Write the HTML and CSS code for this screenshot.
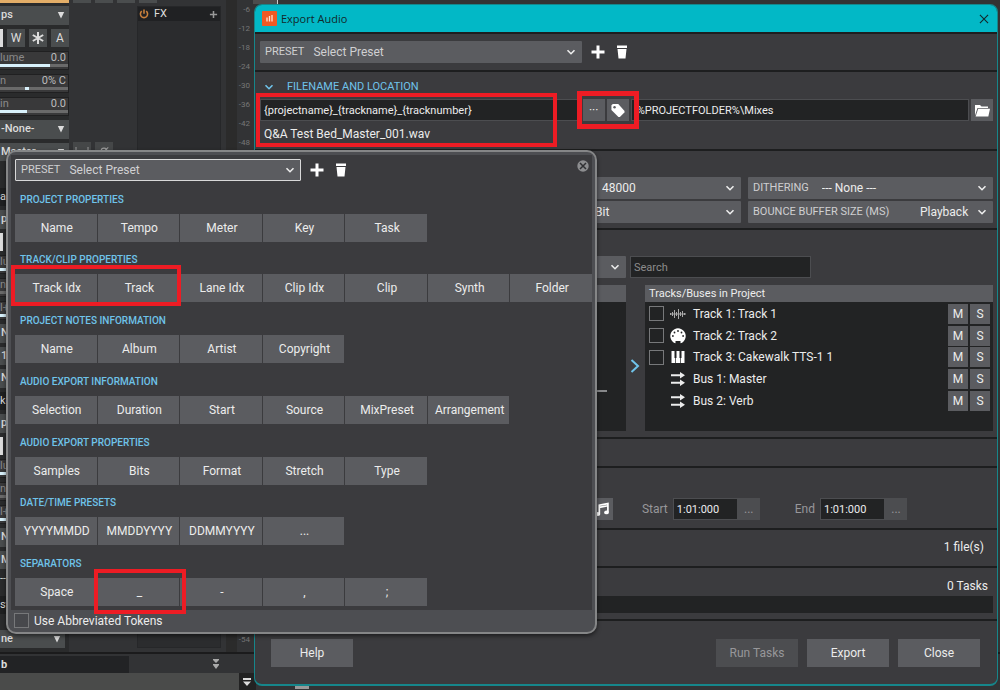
FILE: index.html
```html
<!DOCTYPE html>
<html lang="en">
<head>
<meta charset="utf-8">
<title>Export Audio</title>
<link rel="stylesheet" href="styles.css">
</head>
<body>
<svg class="defs" aria-hidden="true">
  <symbol id="chev" viewBox="0 0 10 10"><path d="M1.5 3.2 5 6.7 8.5 3.2" fill="none" stroke="currentColor" stroke-width="1.6"/></symbol>
  <symbol id="plus" viewBox="0 0 14 14"><path d="M7 0.500v13M.5 7h13" stroke="currentColor" stroke-width="3"/></symbol>
  <symbol id="trash" viewBox="0 0 12 14"><path d="M1 .5h10v2.500H1zM1.500 4h9l-1 9.500h-7z" fill="currentColor"/></symbol>
  <symbol id="down" viewBox="0 0 8 8"><path d="M.8 1h6.400L4 7.500z" fill="currentColor"/></symbol>
  <symbol id="bus" viewBox="0 0 16 16"><path d="M1 4.200h10M1 11.800h10" stroke="currentColor" stroke-width="2"/><path d="M10 1l5 3.200-5 3.200zM10 8.600l5 3.200-5 3.200z" fill="currentColor"/></symbol>
</svg>

<div class="app">
  <div class="mixer">
    <div class="strips">
      <div class="clip-edge"></div>
      <div class="channel">
        <button class="drop">ps<svg><use href="#down"/></svg></button>
        <div class="modes"><button class="lit" aria-label="Read"></button><button>W</button><button class="star" aria-label="Freeze"><svg viewBox="0 0 14 14"><path d="M7 1v12M1.800 4l10.400 6M12.200 4 1.800 10" stroke="currentColor" stroke-width="2"/></svg></button><button>A</button></div>
        <label class="knob"><span>lume</span><b>0.0</b><input class="r75" type="range" value="75"></label>
        <label class="knob"><span>n</span><b>0% C</b><input class="pan" type="range" value="40"></label>
        <label class="knob"><span>in</span><b>0.0</b><input class="r40" type="range" value="40"></label>
        <button class="drop">-None-<svg><use href="#down"/></svg></button>
        <button class="drop">Master<svg><use href="#down"/></svg></button>
        <div></div>
        <div class="name">ack</div>
      </div>
      <div class="channel">
        <button class="drop">ps</button>
        <div class="modes"><button class="lit" aria-label="Read"></button></div>
        <label class="knob"><span>lu</span><input class="r75" type="range" value="75"></label>
        <label class="knob"><span>n</span><input class="pan" type="range" value="40"></label>
        <label class="knob"><span>l+</span><input class="r40" type="range" value="40"></label>
        <button class="drop">No</button>
        <button class="drop">1-C</button>
        <button class="drop">No</button>
        <div class="name">ke</div>
      </div>
      <div class="channel">
        <button class="drop">ps</button>
        <div class="modes"><button class="lit" aria-label="Read"></button></div>
        <label class="knob"><span>lu</span><input class="r75" type="range" value="75"></label>
        <label class="knob"><span>n</span><input class="pan" type="range" value="40"></label>
        <label class="knob"><span>l+</span><input class="r40" type="range" value="40"></label>
        <button class="drop">No</button>
        <button class="drop">Ma</button>
        <div>--</div>
        <div class="name">ste</div>
      </div>
      <button class="drop last">ne<svg><use href="#down"/></svg></button>
    </div>
    <div class="side">
      <div class="tabs"><i></i><i></i><i></i><i></i></div>
      <div class="tools">
        <button aria-label="Interleave"><svg viewBox="0 0 14 10"><path d="M1 1v8M13 1v8M4 4v5M6 5v4M8 5v4M10 4v5" stroke="currentColor"/></svg></button>
        <button aria-label="Phase"><svg viewBox="0 0 14 14"><circle cx="7" cy="7" r="4" fill="none" stroke="currentColor" stroke-width="1.500"/><path d="M2 12 13 2" stroke="currentColor" stroke-width="1.500"/></svg></button>
      </div>
    </div>
    <div class="fx">
      <div class="fx-head">
        <svg class="power" viewBox="0 0 12 12"><path d="M3.400 2.600a4.300 4.300 0 1 0 5.200 0M6 .6v5" fill="none" stroke="currentColor" stroke-width="1.900"/></svg>
        <span>FX</span><svg class="add" viewBox="0 0 10 10"><path d="M5 1v8M1 5h8" stroke="currentColor" stroke-width="1.700"/></svg>
      </div>
    </div>
    <div class="meter"></div>
    <div class="ticks"><span>-6</span><span>-12</span><span>-18</span><span>-24</span><span>-30</span><span>-36</span><span>-42</span><span>-48</span><span class="end">-54</span></div>
    <div class="timeline"><i></i></div>
  </div>
  <div class="trackbar"><div class="tname">b</div><svg viewBox="0 0 8 10"><path d="M1 0h6v1L4 4 1 1zM1 5h6v1L4 10 1 6z" fill="currentColor"/></svg></div>
  <div class="bottom"><div class="fill"></div><div class="corner"><svg viewBox="0 0 10 10"><path d="M1 1h8v2H1zM1 4.500h8L5 9z" fill="currentColor"/></svg></div><i></i></div>
</div>

<main class="dialog">
  <header class="title">
    <svg class="logo" viewBox="0 0 15 15"><rect width="15" height="15" rx="1" fill="#ee5a24"/><path d="M5 6.500v4M7.500 5v5.500M10 4v6.500" stroke="#ffe3d5" stroke-width="1.300"/></svg>
    <h1>Export Audio</h1>
    <button class="x" aria-label="Close window"><svg viewBox="0 0 11 11"><path d="m1 1 9 9M10 1l-9 9" stroke="currentColor" stroke-width="1.200"/></svg></button>
  </header>
  <section class="preset">
    <div class="field grow"><label for="p1">PRESET</label><select id="p1"><option>Select Preset</option></select><svg><use href="#chev"/></svg></div>
    <button class="icon" aria-label="Add preset"><svg><use href="#plus"/></svg></button>
    <button class="icon" aria-label="Delete preset"><svg><use href="#trash"/></svg></button>
  </section>
  <section class="file">
    <h2><svg><use href="#chev"/></svg>FILENAME AND LOCATION</h2>
    <div class="file-row">
      <input class="text tmpl" aria-label="File name" value="{projectname}_{trackname}_{tracknumber}">
      <button class="sq">···</button>
      <button class="sq tag" aria-label="Tokens"><svg viewBox="0 0 16 16"><path d="M1 2.500 2.500 1h5.700L15 8.500 14.800 10 10 15H8.500L1 7.500z" fill="#fff"/><circle cx="4.300" cy="4.500" r="1.300" fill="#5b5c60"/></svg></button>
      <input class="text path" aria-label="Folder" value="%PROJECTFOLDER%&#92;Mixes">
      <button class="sq" aria-label="Browse"><svg viewBox="0 0 16 14"><path d="M1 12V1.500h5L7.500 3H14v1.500H3.500z" fill="#fff"/><path d="M4.200 5.300H16L14.300 13H1.600z" fill="#fff"/></svg></button>
    </div>
    <output>Q&amp;A Test Bed_Master_001.wav</output>
  </section>
  <section class="format">
    <div class="field rate"><select aria-label="Sample rate"><option>48000</option></select><svg><use href="#chev"/></svg></div>
    <div class="field"><label for="d1">DITHERING</label><select id="d1"><option>--- None ---</option></select><svg><use href="#chev"/></svg></div>
    <div class="field depth"><select aria-label="Bit depth"><option>Bit</option></select><svg><use href="#chev"/></svg></div>
    <div class="field buffer"><label for="b1">BOUNCE BUFFER SIZE (MS)</label><select id="b1"><option>Playback</option></select><svg><use href="#chev"/></svg></div>
  </section>
  <section class="source">
    <div class="source-left">
      <div class="field"><select aria-label="Source"><option></option></select><svg><use href="#chev"/></svg></div>
      <div class="panel"><div class="panel-head"></div><div class="panel-body"><hr></div></div>
    </div>
    <div class="source-right">
      <input class="text search" placeholder="Search" aria-label="Search">
      <div class="picker">
        <svg class="arrow" viewBox="0 0 10 14"><path d="m1.500 1 6.500 6-6.500 6" fill="none" stroke="currentColor" stroke-width="2"/></svg>
        <div class="panel">
          <div class="panel-head">Tracks/Buses in Project</div>
          <div class="panel-body">
            <ul>
              <li><input type="checkbox" id="t1"><svg viewBox="0 0 16 16"><path d="M.5 7v2M2.500 6v4M4.500 4v8M6.500 6v4M8.500 3v10M10.500 6v4M12.500 5v6M14.500 7v2M0 8h16" stroke="#aaa"/></svg><label for="t1">Track 1: Track 1</label><button>M</button><button>S</button></li>
              <li><input type="checkbox" id="t2"><svg viewBox="0 0 16 16"><path d="M5.500 15.300A7.700 7.700 0 1 1 10.500 15.300V13h-5z" fill="#fff"/><g fill="#222324"><circle cx="2.900" cy="8" r=".9"/><circle cx="4.500" cy="4.500" r=".9"/><circle cx="8" cy="3" r=".9"/><circle cx="11.500" cy="4.500" r=".9"/><circle cx="13.100" cy="8" r=".9"/></g></svg><label for="t2">Track 2: Track 2</label><button>M</button><button>S</button></li>
              <li><input type="checkbox" id="t3"><svg viewBox="0 0 16 16"><path d="M1.500 2h13v12h-13z" fill="#fff"/><path d="M4.500 2h2v7H6v5h-.7V9h-.8zM9.500 2h2v7h-.8v5H10V9h-.5z" fill="#222324"/></svg><label for="t3">Track 3: Cakewalk TTS-1 1</label><button>M</button><button>S</button></li>
              <li><i></i><svg><use href="#bus"/></svg><span>Bus 1: Master</span><button>M</button><button>S</button></li>
              <li><i></i><svg><use href="#bus"/></svg><span>Bus 2: Verb</span><button>M</button><button>S</button></li>
            </ul>
          </div>
        </div>
      </div>
    </div>
  </section>
  <section class="blank"></section>
  <section class="range">
    <button class="sq" aria-label="Musical time"><svg viewBox="0 0 14 14"><path d="M4.500 11V3L12.500 1.500v8M4.500 5l8-1.500" fill="none" stroke="#fff" stroke-width="1.600"/><ellipse cx="3.200" cy="11.200" rx="2.200" ry="1.800" fill="#fff"/><ellipse cx="11.200" cy="9.700" rx="2.200" ry="1.800" fill="#fff"/></svg></button>
    <div class="time"><label for="s1">Start</label><input class="text" id="s1" value="1:01:000"><button class="sq dim">...</button></div>
    <div class="time"><label for="e1">End</label><input class="text" id="e1" value="1:01:000"><button class="sq dim">...</button></div>
  </section>
  <section class="files">1 file(s)</section>
  <section class="tasks"><span>0 Tasks</span><div class="task-list"></div></section>
  <footer class="actions">
    <button>Help</button><button class="push" disabled>Run Tasks</button><button>Export</button><button>Close</button>
  </footer>
</main>

<aside class="popup">
  <div class="popup-main">
    <div class="preset">
      <div class="field"><label for="p2">PRESET</label><select id="p2"><option>Select Preset</option></select><svg><use href="#chev"/></svg></div>
      <button class="icon" aria-label="Add preset"><svg><use href="#plus"/></svg></button>
      <button class="icon" aria-label="Delete preset"><svg><use href="#trash"/></svg></button>
      <button class="close" aria-label="Close tokens"><svg viewBox="0 0 12 12"><circle cx="6" cy="6" r="5.700" fill="#8d8e90"/><path d="m3 3 6 6M9 3 3 9" stroke="#303134" stroke-width="1.500"/></svg></button>
    </div>
    <div class="groups">
      <div class="group"><h3>PROJECT PROPERTIES</h3><div class="tokens"><button>Name</button><button>Tempo</button><button>Meter</button><button>Key</button><button>Task</button></div></div>
      <div class="group"><h3>TRACK/CLIP PROPERTIES</h3><div class="tokens"><button>Track Idx</button><button>Track</button><button>Lane Idx</button><button>Clip Idx</button><button>Clip</button><button>Synth</button><button>Folder</button></div></div>
      <div class="group"><h3>PROJECT NOTES INFORMATION</h3><div class="tokens"><button>Name</button><button>Album</button><button>Artist</button><button>Copyright</button></div></div>
      <div class="group"><h3>AUDIO EXPORT INFORMATION</h3><div class="tokens"><button>Selection</button><button>Duration</button><button>Start</button><button>Source</button><button>MixPreset</button><button>Arrangement</button></div></div>
      <div class="group"><h3>AUDIO EXPORT PROPERTIES</h3><div class="tokens"><button>Samples</button><button>Bits</button><button>Format</button><button>Stretch</button><button>Type</button></div></div>
      <div class="group"><h3>DATE/TIME PRESETS</h3><div class="tokens"><button>YYYYMMDD</button><button>MMDDYYYY</button><button>DDMMYYYY</button><button>...</button></div></div>
      <div class="group"><h3>SEPARATORS</h3><div class="tokens"><button>Space</button><button>_</button><button>-</button><button>,</button><button>;</button></div></div>
    </div>
  </div>
  <label class="abbr"><input type="checkbox">Use Abbreviated Tokens</label>
</aside>

<div class="mark mark-name"></div>
<div class="mark mark-tag"></div>
<div class="mark mark-track"></div>
<div class="mark mark-under"></div>
</body>
</html>
```
FILE: styles.css
```css
* { box-sizing: border-box; }
body { margin: 0; background: #323335; color: #ececec; font: 12px/14px Roboto, "Liberation Sans", sans-serif; overflow: hidden; }
button, input, select { font: inherit; color: inherit; border: 0; border-radius: 0; margin: 0; padding: 0; min-width: 0; }
button { background: #5b5c60; text-align: center; }
h1, h2, h3, ul { margin: 0; padding: 0; font-weight: 400; }
svg { flex: none; display: block; }
.defs { position: absolute; width: 0; height: 0; }

/* Application behind the dialog */
.app { display: flex; flex-direction: column; height: 100vh; color: #dcdcdc; }
.mixer { flex: 1; min-height: 0; display: flex; overflow: hidden; border-bottom: 2px solid #1b1b1c; }
.strips { width: 69px; flex: none; display: flex; flex-direction: column; background: #2a2b2c; }
.clip-edge { height: 3px; margin-bottom: 3px; background: #e3ae68; flex: none; }
.channel { height: 204px; flex: none; display: grid; grid-template-rows: repeat(9, 1fr); row-gap: 4px; padding-bottom: 4px; font-size: 11px; line-height: 12px; white-space: nowrap; overflow: hidden; }
.drop { background: #4a4d4e; display: flex; justify-content: space-between; align-items: center; padding: 0 4px 0 1px; font-weight: 500; }
.drop svg { width: 8px; height: 8px; }
.last { width: 65px; height: 18px; flex: none; margin-top: 12px; font-size: 11px; }
.modes { display: grid; grid-template-columns: 3px 18px 18px 18px; column-gap: 4px; }
.modes button { background: #4a4d4e; font-size: 12px; }
.modes .lit { background: #dcdcdc; }
.star svg { width: 14px; height: 14px; margin: 0 auto; }
.knob { display: grid; grid-template-columns: 1fr auto; align-content: space-between; background: #39393a; border: 1px solid #202021; border-left: 0; padding-bottom: 2px; }
.knob span { color: #8a8a8a; }
.knob b { font-weight: 400; padding-right: 2px; color: #bdbdbd; }
.knob input { appearance: none; grid-column: 1 / 3; width: 100%; height: 3px; background: #6a6a6a; }
.knob input::-webkit-slider-thumb { appearance: none; width: 0; height: 0; }
.knob .r75 { background: linear-gradient(90deg, #d8f1fb 73%, #6a6a6a 73%); }
.knob .r40 { background: linear-gradient(90deg, #d8f1fb 40%, #6a6a6a 40%); }
.knob .pan { background: linear-gradient(90deg, #6a6a6a 37%, #d8f1fb 37%, #d8f1fb 43%, #6a6a6a 43%); }
.name { background: #1f2021; display: flex; align-items: center; }
.side { width: 68px; flex: none; padding-left: 4px; }
.tabs { display: flex; gap: 4px; margin-right: -20px; }
.tabs i { width: 18px; height: 3px; background: #4a4d4e; }
.tools { display: flex; gap: 4px; margin-top: 139px; }
.tools button { width: 18px; height: 18px; background: #454748; color: #999; }
.tools svg { width: 14px; height: 10px; margin: 0 auto; }
.fx { width: 84px; flex: none; margin: 6px 0 4px; background: #2b2c2e; border: 1px solid #262729; }
.fx-head { display: flex; align-items: center; gap: 5px; height: 14px; padding: 0 2px 0 1px; background: #202123; font-size: 11px; }
.power { width: 10px; height: 10px; color: #c9803c; }
.add { width: 9px; height: 9px; margin-left: auto; color: #999; }
.meter { width: 11px; flex: none; margin: 0 0 0 5px; background: #2b2b2b; }
.ticks { width: 13px; flex: none; display: flex; flex-direction: column; align-items: flex-end; font-size: 8px; line-height: 8px; color: #777; gap: 11px; padding: 6px 0 8px; }
.ticks .end { margin-top: auto; }
.timeline { flex: 1; margin-left: 3px; background: #333; }
.timeline i { display: block; width: 25px; height: 4px; background: #4c4c4c; border-right: 1px solid #ccc; }
.trackbar { height: 19px; flex: none; display: flex; align-items: center; gap: 83px; padding-top: 1px; color: #aaa; }
.tname { width: 129px; height: 17px; background: #222325; color: #ddd; line-height: 17px; padding-left: 1px; font-weight: 700; font-size: 11px; }
.trackbar svg { width: 8px; height: 10px; }
.bottom { height: 17px; flex: none; display: flex; }
.fill { width: 239px; background: #4a4b4a; }
.corner { width: 17px; padding: 4px 3px; background: #222; }
.corner svg { width: 10px; height: 10px; }
.bottom i { width: 14px; height: 4px; margin: 12px 0 0 39px; background: #999; }

/* Export dialog */
.dialog { position: absolute; inset: 4px 2px 4px 254px; display: flex; flex-direction: column; background: #3b3b3e; border: 1px solid #16868b; border-bottom-width: 2px; border-radius: 8px; overflow: hidden; }
.title { display: flex; align-items: center; gap: 4px; height: 27px; flex: none; padding: 0 8px 0 7px; background: #02b8c6; color: #12282b; }
.logo { width: 15px; height: 15px; }
.title h1 { font: 11px/15px "Open Sans", sans-serif; }
.x { margin-left: auto; background: none; }
.x svg { width: 10px; height: 10px; }
.dialog section { flex: none; border-top: 2px solid #1d1e1f; padding: 0 4px 0 5px; }
.field { display: flex; align-items: center; gap: 9px; height: 22px; padding: 0 6px 0 5px; background: #5b5c60; border-radius: 1px; }
.field label { color: #cfcfd1; flex: none; font-size: 11px; }
.field select { appearance: none; flex: 1; background: transparent; height: 20px; }
.field svg { width: 10px; height: 10px; }
.preset { display: flex; align-items: center; gap: 8px; }
.preset select { color: #d0d0d2; }
.dialog .preset { height: 38px; }
.preset .grow { width: 322px; }
.icon { background: none; width: 16px; height: 16px; color: #fff; display: grid; place-items: center; }
.icon svg { width: 14px; height: 14px; }
.dialog .file { height: 79px; }
.file h2 { display: flex; align-items: center; gap: 13px; padding: 8px 0 6px 4px; color: #6fc3ea; font-size: 11px; line-height: 13px; }
.file h2 svg { width: 10px; height: 10px; }
.file-row { display: flex; gap: 2px; }
.text { background: #222324; border: 1px solid #4c4d50; height: 22px; padding: 0 3px; font-size: 11px; }
.tmpl { flex: 20; }
.path { flex: 21; padding-left: 5px; }
.sq { width: 22px; height: 22px; flex: none; background: #5b5c60; display: grid; place-items: center; }
.sq svg { width: 16px; height: 15px; }
.file output { display: block; padding: 6px 4px; }
.dialog .format { display: grid; grid-template-columns: 1fr 245px 245px; gap: 2px 7px; height: 79px; padding-top: 26px; align-content: start; }
.rate, .depth { grid-column: 2; }
.rate { padding-left: 106px; }
.depth { padding-left: 99px; }
.format .field { gap: 13px; }
.format select { padding: 0; }
.buffer select { flex: none; margin-left: auto; }
.format .buffer { gap: 8px; }
.dialog .source { display: flex; gap: 4px; height: 209px; padding-top: 26px; padding-bottom: 6px; }
.source-left { flex: 1; display: flex; flex-direction: column; gap: 7px; }
.source-right { width: 363px; flex: none; display: flex; flex-direction: column; gap: 7px; }
.search { width: 181px; }
.search::placeholder { color: #8c8c8c; }
.picker { flex: 1; display: flex; gap: 5px; align-items: stretch; }
.arrow { width: 10px; height: 14px; margin-top: 74px; color: #6fc3ea; }
.panel { flex: 1; display: flex; flex-direction: column; }
.panel-head { height: 17px; padding: 0 4px; background: #5b5c60; font-size: 11px; line-height: 17px; }
.panel-body { flex: 1; background: #222324; padding: 1px 3px 0 4px; }
.panel hr { width: 16px; border: 0; border-top: 2px solid #88898b; margin: 87px 16px 0 auto; }
ul { height: 109px; display: grid; grid-template-rows: repeat(5, 1fr); list-style: none; }
li { display: grid; grid-template-columns: 15px 16px 1fr 20px 22px; align-items: center; }
li svg { width: 16px; height: 16px; margin-left: 6px; }
li label, li span { padding-left: 13px; }
li button { height: 20px; width: 20px; }
li button:last-child { margin-left: 2px; }
[type=checkbox] { appearance: none; width: 15px; height: 15px; background: #222324; border: 1px solid #77787a; }
.dialog .blank { height: 29px; }
.dialog .range { height: 62px; display: flex; align-items: flex-start; padding-top: 30px; justify-content: flex-end; padding-right: 90px; }
.time { display: flex; align-items: center; margin-left: 29px; color: #97979a; }
.time label { margin-right: 5px; }
.time:last-child { margin-left: 35px; }
.time .text { width: 65px; color: #ececec; }
.dim { background: #4c4d50; color: #97979a; }
.dialog .files { height: 38px; text-align: right; padding: 10px 13px; }
.dialog .tasks { height: 53px; text-align: right; padding-top: 11px; }
.tasks span { display: block; padding: 0 5px 3px; }
.task-list { height: 17px; background: #222324; }
.actions { flex: 1; border-top: 2px solid #1d1e1f; display: flex; gap: 9px; padding: 18px 17px 0 16px; }
.actions button { width: 82px; height: 28px; }
.push { margin-left: auto; }
.actions button:disabled { background: #4c4d50; color: #97979a; }

/* Token popup */
.popup { position: absolute; left: 6px; top: 150px; width: 591px; padding: 3px; background: #4d4e52; border: 2px solid #858687; border-radius: 10px; box-shadow: 0 2px 4px #0008; }
.popup-main { background: #3b3b3e; padding: 4px 0 4px 4px; }
.popup .field { width: 286px; border: 1px solid #d8d8d8; padding: 0 5px; }
.popup .preset { height: 22px; }
.close { background: none; margin: 0 3px 8px auto; }
.close svg { width: 12px; height: 12px; }
.groups { height: 425px; display: grid; grid-template-rows: repeat(7, 1fr); }
.group { display: flex; flex-direction: column; justify-content: flex-end; gap: 7px; }
h3 { color: #6fc3ea; font-size: 10px; font-weight: 500; line-height: 14px; padding-left: 5px; }
.tokens { display: grid; grid-template-columns: repeat(7, 1fr); gap: 1px; }
.tokens button { height: 28px; padding-left: 2px; }
.abbr { display: flex; align-items: center; gap: 5px; padding: 3px 0 1px 3px; }
.abbr [type=checkbox] { background: #47484c; }

/* Highlight frames */
.mark { position: absolute; border: 4px solid #ed1c24; pointer-events: none; }
.mark-name { left: 256px; top: 93px; width: 301px; height: 54px; }
.mark-tag { left: 577px; top: 91px; width: 62px; height: 38px; border-width: 5px; }
.mark-track { left: 11px; top: 265px; width: 170px; height: 41px; }
.mark-under { left: 94px; top: 569px; width: 92px; height: 45px; }
```
